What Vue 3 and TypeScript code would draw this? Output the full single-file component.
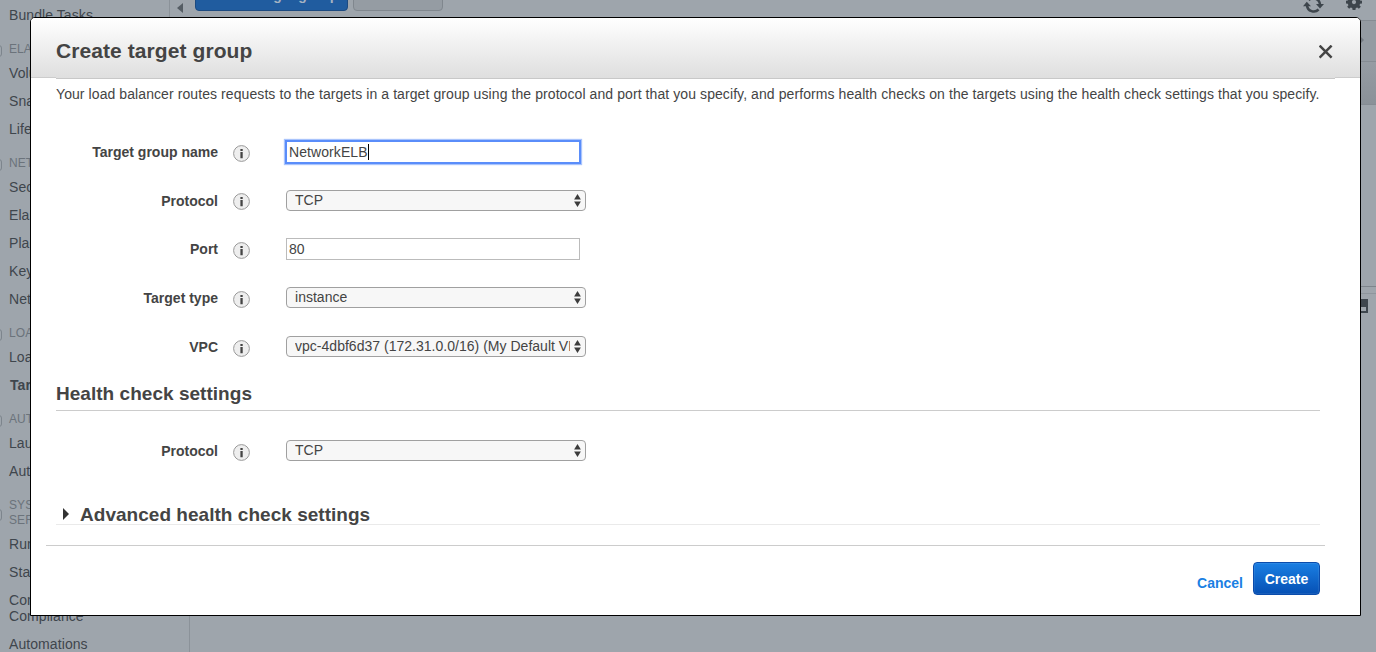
<script setup lang="ts">
import { ref } from 'vue'

interface NavEntry {
  text: string
  kind: 'item' | 'head'
  active?: boolean
}

interface FieldRow {
  label: string
  type: 'text' | 'select'
  value: string
  focused?: boolean
  short?: boolean
}

const nav: NavEntry[] = [
  { text: 'Bundle Tasks', kind: 'item' },
  { text: 'ELASTIC BLOCK STORE', kind: 'head' },
  { text: 'Volumes', kind: 'item' },
  { text: 'Snapshots', kind: 'item' },
  { text: 'Lifecycle Manager', kind: 'item' },
  { text: 'NETWORK & SECURITY', kind: 'head' },
  { text: 'Security Groups', kind: 'item' },
  { text: 'Elastic IPs', kind: 'item' },
  { text: 'Placement Groups', kind: 'item' },
  { text: 'Key Pairs', kind: 'item' },
  { text: 'Network Interfaces', kind: 'item' },
  { text: 'LOAD BALANCING', kind: 'head' },
  { text: 'Load Balancers', kind: 'item' },
  { text: 'Target Groups', kind: 'item', active: true },
  { text: 'AUTO SCALING', kind: 'head' },
  { text: 'Launch Configurations', kind: 'item' },
  { text: 'Auto Scaling Groups', kind: 'item' },
  { text: 'SYSTEMS MANAGER\nSERVICES', kind: 'head' },
  { text: 'Run Command', kind: 'item' },
  { text: 'State Manager', kind: 'item' },
  { text: 'Configuration\nCompliance', kind: 'item' },
  { text: 'Automations', kind: 'item' },
]

const fields = ref<FieldRow[]>([
  { label: 'Target group name', type: 'text', value: 'NetworkELB', focused: true },
  { label: 'Protocol', type: 'select', value: 'TCP', short: true },
  { label: 'Port', type: 'text', value: '80' },
  { label: 'Target type', type: 'select', value: 'instance' },
  { label: 'VPC', type: 'select', value: 'vpc-4dbf6d37 (172.31.0.0/16) (My Default VPC)' },
])

const healthFields = ref<FieldRow[]>([{ label: 'Protocol', type: 'select', value: 'TCP' }])
</script>

<template>
  <div class="console">
    <nav class="sidebar">
      <div
        v-for="entry in nav"
        :key="entry.text"
        :class="[entry.kind, { active: entry.active }]"
      >{{ entry.text }}</div>
    </nav>
    <main class="main">
      <div class="toolbar">
        <span class="collapse"></span>
        <span class="bg-btn primary">Create target group</span>
        <span class="bg-btn">Actions</span>
        <svg class="refresh" width="21" height="20" viewBox="0 0 21 20">
          <path d="M4 10.5a6.8 6.8 0 0 0 11.6 4M17 9.5a6.8 6.8 0 0 0-11.4-4.4" fill="none" stroke="#3d454c" stroke-width="2.5" />
          <path d="M0 11.2L3.8 6.8L8 11.2zM13 9h8L17 13.4z" fill="#3d454c" />
        </svg>
        <svg class="gear" width="16" height="16" viewBox="0 0 16 16">
          <path
            d="M6.6 0h2.8l.4 2 1.5.6L13 1.4 14.8 3.3l-1.3 1.6.6 1.5 1.9.3v2.7l-1.9.3-.6 1.5 1.3 1.6-1.9 1.9-1.6-1.2-1.5.6-.4 2H6.6l-.4-2-1.5-.6-1.6 1.2-1.9-1.9 1.2-1.6-.6-1.5L0 9.4V6.7l1.8-.3.6-1.5L1.2 3.3 3 1.4l1.7 1.2L6.2 2zM8 6a2.1 2.1 0 1 0 0 4.2 2.1 2.1 0 0 0 0-4.2z"
            fill="#3d454c"
            fill-rule="evenodd"
          />
        </svg>
      </div>
      <div class="filter"><i class="next"></i></div>
      <div class="thead"></div>
      <div class="rows"></div>
      <div class="splitter"></div>
      <div class="detail"><span class="pane-icon"></span></div>
    </main>

    <section class="modal">
      <header class="modal-head">
        <h2>Create target group</h2>
        <svg class="close" width="14" height="14" viewBox="0 0 14 14">
          <path d="M.6 .6L12.6 12.6M12.6 .6L.6 12.6" stroke="#444" stroke-width="2.5" />
        </svg>
      </header>
      <div class="modal-body">
        <p class="intro"><span>Your load balancer routes requests to the targets in a target group using the protocol and port that you specify, and performs health checks on the targets using the health check settings that you specify.</span></p>

        <div v-for="f in fields" :key="f.label" class="row" :class="{ short: f.short }">
          <label>{{ f.label }}</label>
          <svg class="info" width="17" height="17" viewBox="0 0 17 17">
            <circle cx="8.5" cy="8.5" r="7.9" fill="#eee" stroke="#999" />
            <path d="M7.4 4h2.3v2H7.4zM7.4 7h2.3v6.2H7.4z" fill="#444" />
          </svg>
          <div v-if="f.type === 'text'" class="input" :class="{ focused: f.focused }">
            <span>{{ f.value }}</span><i v-if="f.focused" class="caret"></i>
          </div>
          <div v-else class="select">
            <span>{{ f.value }}</span>
            <svg width="7" height="13" viewBox="0 0 7 13"><path d="M3.5 0L6.9 5.4H.1zM.1 7.6h6.8L3.5 13z" fill="#3c3c3c" /></svg>
          </div>
        </div>

        <h3 class="health">Health check settings</h3>

        <div v-for="f in healthFields" :key="f.label" class="row">
          <label>{{ f.label }}</label>
          <svg class="info" width="17" height="17" viewBox="0 0 17 17">
            <circle cx="8.5" cy="8.5" r="7.9" fill="#eee" stroke="#999" />
            <path d="M7.4 4h2.3v2H7.4zM7.4 7h2.3v6.2H7.4z" fill="#444" />
          </svg>
          <div class="select">
            <span>{{ f.value }}</span>
            <svg width="7" height="13" viewBox="0 0 7 13"><path d="M3.5 0L6.9 5.4H.1zM.1 7.6h6.8L3.5 13z" fill="#3c3c3c" /></svg>
          </div>
        </div>

        <h3 class="advanced"><i class="tri"></i><span>Advanced health check settings</span></h3>
      </div>
      <footer class="modal-foot">
        <a class="cancel">Cancel</a>
        <button class="create" type="button">Create</button>
      </footer>
    </section>
  </div>
</template>

<style>
body {
  overflow: hidden;
}
</style>

<style scoped>
* {
  box-sizing: border-box;
}
.console {
  position: relative;
  display: flex;
  width: 1376px;
  height: 652px;
  overflow: hidden;
  background: #9ea5ac;
  color: #444;
  font: 14px/16px 'Liberation Sans', Arial, sans-serif;
  letter-spacing: 0.08px;
}
.sidebar {
  flex: none;
  width: 190px;
  height: 660px;
  padding-top: 1px;
  border-right: 1px solid #8b9299;
  white-space: pre;
}
.item {
  padding: 6px 0 6px 9px;
  color: #3f464d;
}
.item.active {
  padding-left: 10px;
  font-weight: bold;
}
.head {
  position: relative;
  padding: 13px 0 2px 9px;
  font-size: 12px;
  line-height: 15px;
  color: #6b737b;
}
.head::before {
  content: '';
  position: absolute;
  left: -10px;
  top: calc(50% + 1px);
  width: 10px;
  height: 10px;
  border: 1px solid #7d858d;
  border-radius: 3px;
}
.main {
  flex: 1;
  display: flex;
  flex-direction: column;
  margin-left: -21px;
}
.toolbar {
  display: flex;
  align-items: flex-start;
  height: 20px;
  flex: none;
  border-left: 1px solid #8b9299;
  background: #9ea5ac;
}
.collapse {
  margin: 3px 12px 0 7px;
  border: 5.5px solid transparent;
  border-width: 5.5px 6px 5.5px 0;
  border-right-color: #555d64;
}
.bg-btn {
  width: 90px;
  height: 32px;
  margin: -21px 5px 0 0;
  padding-left: 11px;
  border: 1px solid #80878e;
  border-radius: 4px;
  background: #959ca3;
  color: #b3b9bf;
  font-weight: bold;
  line-height: 31px;
  white-space: nowrap;
}
.bg-btn.primary {
  width: 153px;
  border-color: #1c4a80;
  background: #205c9f;
  color: #a5b3c2;
}
.refresh {
  margin: -5px 0 0 auto;
}
.gear {
  margin: -6px 14px 0 22px;
}
.filter {
  flex: none;
  display: flex;
  justify-content: flex-end;
  height: 42px;
  border-top: 1px solid #858c93;
  border-bottom: 1px solid #858c93;
  background: #949ba2;
}
.next {
  width: 4px;
  height: 8px;
  margin: 15px 12px 0 0;
  border: solid transparent;
  border-width: 4px 0 4px 4px;
  border-left-color: #737a81;
}
.thead {
  flex: none;
  height: 43px;
  border-bottom: 1px solid #858c93;
  background: linear-gradient(#959ca3, #8a9198);
}
.rows {
  flex: none;
  height: 181px;
}
.splitter {
  flex: none;
  height: 8px;
  border-top: 1px solid #7e858c;
  border-bottom: 1px solid #8e959c;
}
.detail {
  display: flex;
  justify-content: flex-end;
  padding: 5px 8px 0 0;
}
.pane-icon {
  width: 14px;
  height: 14px;
  border: 2px solid #3f474e;
  border-top-width: 8px;
}
.modal {
  position: absolute;
  left: 30px;
  top: 17px;
  width: 1331px;
  height: 599px;
  border: 1px solid #000;
  border-radius: 5px 5px 0 0;
  background: #fff;
  display: flex;
  flex-direction: column;
}
.modal-head {
  position: relative;
  flex: none;
  display: flex;
  justify-content: space-between;
  align-items: center;
  height: 60px;
  padding: 7px 27px 0 25px;
  border-bottom: 1px solid #ccc;
  border-radius: 4px 4px 0 0;
  background: linear-gradient(#fff, #dfdfdf);
}
.modal-head::after {
  content: '';
  position: absolute;
  left: 25px;
  right: 25px;
  bottom: -2px;
  height: 2px;
  background: linear-gradient(#dfdfdf 1px, #c8c8c8 1px);
}
h2 {
  margin: 0;
  font-size: 21px;
  line-height: 24px;
  letter-spacing: 0.08px;
}
.close {
  margin-top: 1px;
}
.modal-body {
  flex: none;
  height: 467px;
  padding: 8px 40px 0 25px;
}
.intro {
  margin: 0 0 26px;
  white-space: nowrap;
  letter-spacing: 0.083px;
}
.row {
  display: grid;
  grid-template-columns: 162px 17px 300px;
  column-gap: 0;
  align-items: start;
  height: 49px;
}
.row.short {
  height: 48px;
}
.row label {
  padding-top: 16px;
  text-align: right;
  font-weight: bold;
  letter-spacing: 0;
}
.info {
  margin: 17px 0 0 15px;
  display: block;
}
.row.short .info {
  margin-top: 16px;
}
.input,
.select {
  position: relative;
  display: flex;
  margin: 13px 0 0 51px;
  white-space: nowrap;
}
.input {
  width: 294px;
  height: 22px;
  padding: 2px 2px;
  border: 1px solid #bbb;
}
.focused {
  border-color: #5a8dfa;
  box-shadow: 0 0 0 1px #5a8dfa, 0 0 1px 2px #a9c4fc;
}
.caret {
  width: 1px;
  height: 16px;
  background: #000;
}
.select {
  width: 300px;
  height: 21px;
  padding: 1px 3px 0 8px;
  border: 1px solid #a0a0a0;
  border-radius: 4px;
  background: #f7f7f7;
  justify-content: space-between;
  letter-spacing: 0.02px;
}
.select span {
  max-width: 275px;
  overflow: hidden;
}
.select svg {
  flex: none;
  margin: 2px 1px 0 0;
}
h3 {
  margin: 0;
  font-size: 19px;
  line-height: 24px;
  letter-spacing: 0.03px;
}
.health {
  height: 29px;
  margin: 10px 0 16px;
  border-bottom: 1px solid #ccc;
}
.advanced {
  display: flex;
  height: 22px;
  margin-top: 27px;
  border-bottom: 1px solid #eaeaea;
}
.tri {
  margin: 5px 11px 0 7px;
  width: 0;
  height: 0;
  border: solid transparent;
  border-width: 6px 0 6px 6px;
  border-left-color: #333;
}
.modal-foot {
  display: flex;
  justify-content: flex-end;
  margin: 0 35px 0 15px;
  padding: 16px 5px 0 0;
  border-top: 1px solid #ccc;
}
.cancel {
  margin: 13px 10px 0 0;
  color: #1a7fe3;
  font-weight: bold;
  letter-spacing: 0;
}
.create {
  width: 67px;
  height: 33px;
  padding: 0;
  border: 1px solid #0a4cac;
  border-radius: 4px;
  background: linear-gradient(#1a7fe3, #0650b4);
  box-shadow: inset 0 0 0 1px rgba(255, 255, 255, 0.08);
  color: #fff;
  font: bold 14px/16px 'Liberation Sans', Arial, sans-serif;
}
</style>
